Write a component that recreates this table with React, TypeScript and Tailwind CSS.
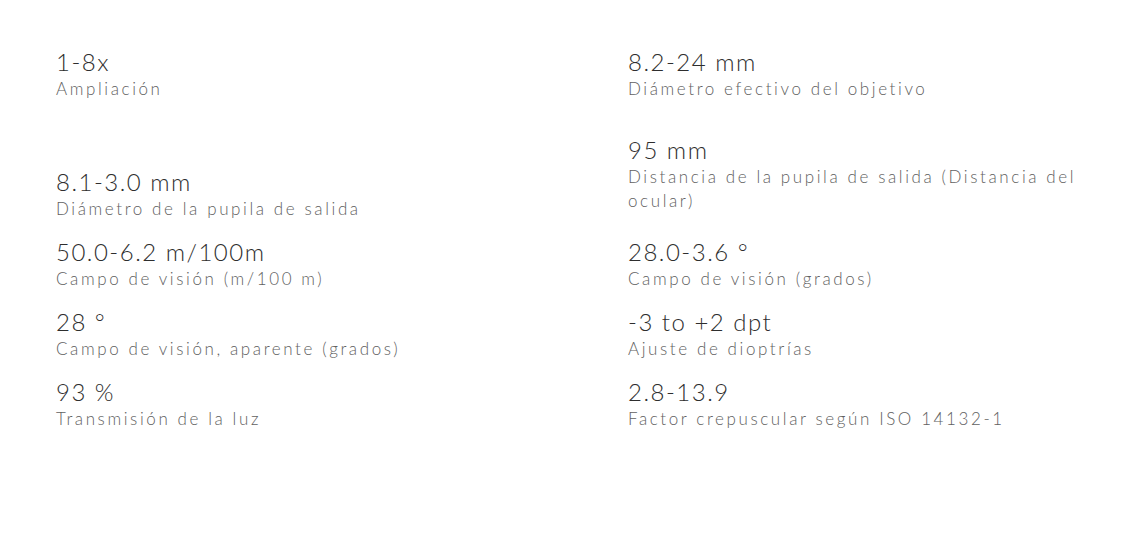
type SpecItem = { value: string; label: string; gap: string };

// two independent columns, the vertical gaps follow the reference
const left: SpecItem[] = [
  { value: "1-8x", label: "Ampliación", gap: "" },
  { value: "8.1-3.0 mm", label: "Diámetro de la pupila de salida", gap: "mt-[66px]" },
  { value: "50.0-6.2 m/100m", label: "Campo de visión (m/100 m)", gap: "mt-4" },
  { value: "28 °", label: "Campo de visión, aparente (grados)", gap: "mt-4" },
  { value: "93 %", label: "Transmisión de la luz", gap: "mt-4" },
];

const right: SpecItem[] = [
  { value: "8.2-24 mm", label: "Diámetro efectivo del objetivo", gap: "" },
  {
    value: "95 mm",
    label: "Distancia de la pupila de salida (Distancia del ocular)",
    gap: "mt-[34px]",
  },
  { value: "28.0-3.6 °", label: "Campo de visión (grados)", gap: "mt-6" },
  { value: "-3 to +2 dpt", label: "Ajuste de dioptrías", gap: "mt-4" },
  { value: "2.8-13.9", label: "Factor crepuscular según ISO 14132-1", gap: "mt-4" },
];

function Spec({ value, label, gap }: SpecItem) {
  return (
    <div className={`flex flex-col ${gap}`}>
      <span className="text-[24px] leading-[30px] font-light tracking-[1.5px] text-[#2e2e2e]">
        {value}
      </span>
      <span className="text-[17px] leading-[24px] font-light tracking-[2.6px] text-[#616161]">
        {label}
      </span>
    </div>
  );
}

export default function App() {
  return (
    <div className="min-h-screen bg-white font-['Lato',sans-serif]">
      <div className="flex pl-14 pt-[47px]">
        <div className="flex w-[572px] flex-col">
          {left.map((s) => (
            <Spec key={s.value} {...s} />
          ))}
        </div>
        <div className="flex w-[482px] flex-col">
          {right.map((s) => (
            <Spec key={s.value} {...s} />
          ))}
        </div>
      </div>
    </div>
  );
}
